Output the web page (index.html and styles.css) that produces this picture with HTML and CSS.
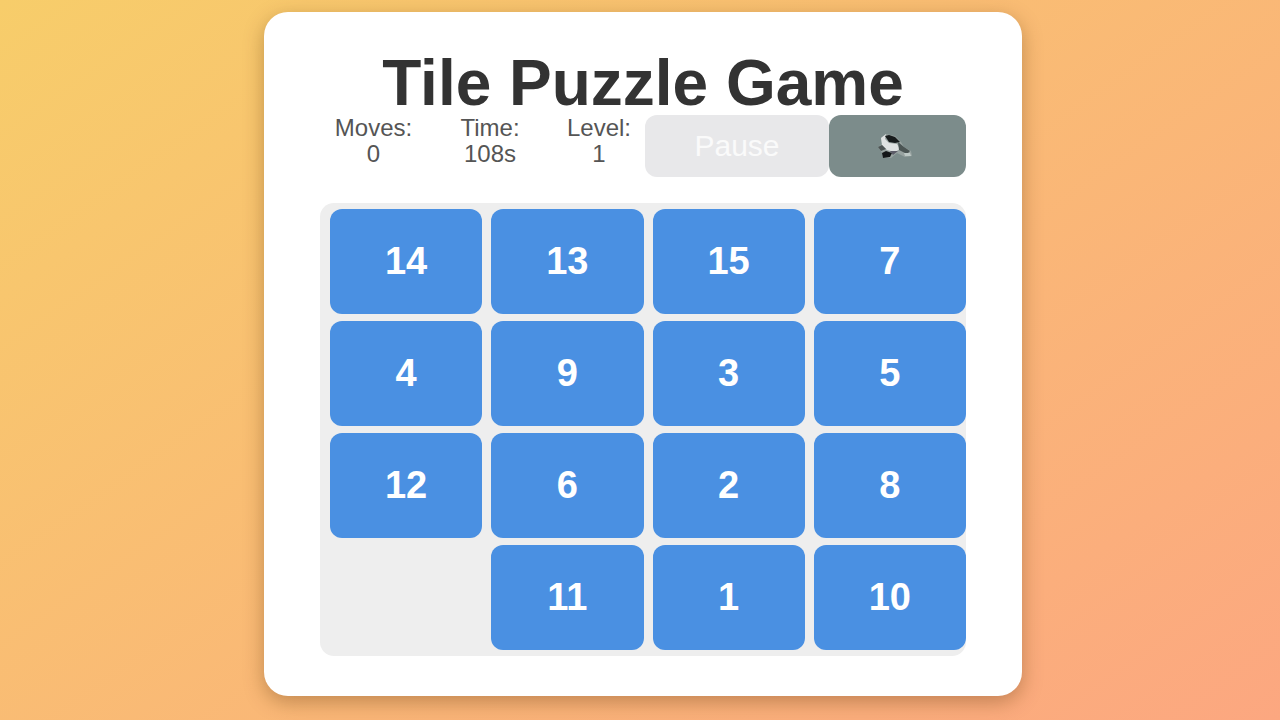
FILE: index.html
```html
<!DOCTYPE html>
<html lang="en">
<head>
<meta charset="utf-8">
<meta name="viewport" content="width=device-width, initial-scale=1">
<title>Tile Puzzle Game</title>
<link rel="stylesheet" href="styles.css">
</head>
<body>
<main class="card">
  <h1 class="title">Tile Puzzle Game</h1>
  <div class="toolbar">
    <div class="stats">
      <div class="stat">Moves: <span class="value">0</span></div>
      <div class="stat">Time: <span class="value">108s</span></div>
      <div class="stat">Level: <span class="value">1</span></div>
    </div>
    <button class="button pause" type="button" disabled>Pause</button>
    <button class="button sound" type="button" aria-label="Toggle sound">
      <svg class="sound-icon" viewBox="0 0 36 26" aria-hidden="true">
        <path d="M1 14 5 11 4 5 9 1 18 3 24 9 27 14 34 18 35 23 28 24 20 20 14 25 6 25 5 20Z" fill="#98a3a1"/>
        <path d="M4 5 9 1 8 6 12 10 20 11 23 16 18 19 10 17 5 12Z" fill="#dfe2e2"/>
        <path d="M8 3 12 2 18 4 23 9 18 10 12 9Z" fill="#171b1c"/>
        <path d="M21 9 27 14 33 18 30 21 22 17Z" fill="#4b5554"/>
        <path d="M1 14 5 12 9 16 4 18Z" fill="#4c5353"/>
        <path d="M5 20 9 18 15 20 13 24 6 25Z" fill="#141719"/>
        <path d="M13 18 21 18 16 22Z" fill="#5c5c68"/>
        <path d="M27 20 33 20 34 23 28 23Z" fill="#bdc8c5"/>
      </svg>
    </button>
  </div>
  <div class="board">
    <button class="tile" type="button">14</button>
    <button class="tile" type="button">13</button>
    <button class="tile" type="button">15</button>
    <button class="tile" type="button">7</button>
    <button class="tile" type="button">4</button>
    <button class="tile" type="button">9</button>
    <button class="tile" type="button">3</button>
    <button class="tile" type="button">5</button>
    <button class="tile" type="button">12</button>
    <button class="tile" type="button">6</button>
    <button class="tile" type="button">2</button>
    <button class="tile" type="button">8</button>
    <div class="blank"></div>
    <button class="tile" type="button">11</button>
    <button class="tile" type="button">1</button>
    <button class="tile" type="button">10</button>
  </div>
</main>
</body>
</html>
```
FILE: styles.css
```css
* {
  box-sizing: border-box;
}

body {
  margin: 0;
  min-height: 100vh;
  padding: 12px 0 24px 6px;
  display: flex;
  justify-content: center;
  align-items: flex-start;
  background: linear-gradient(145deg, #f7cd6a, #fca780);
  font-family: "Liberation Sans", Arial, sans-serif;
  color: #555;
}

.card {
  width: 100%;
  max-width: 758px;
  padding: 40px 56px;
  background: #fff;
  border-radius: 24px;
  box-shadow: 0 6px 20px rgba(90, 50, 10, 0.35);
}

.title {
  margin: 0;
  font-size: 64px;
  line-height: 63px;
  text-align: center;
  color: #333;
}

.toolbar {
  display: flex;
  align-items: flex-start;
}

.stats {
  flex: 1;
  display: grid;
  grid-template-columns: 107fr 126fr 92fr;
}

.stat {
  font-size: 24px;
  line-height: 26px;
  text-align: center;
}

.value {
  display: block;
}

.button {
  height: 62px;
  padding: 0;
  border: 0;
  border-radius: 12px;
  font-family: inherit;
  font-size: 30px;
  color: #fff;
}

.pause {
  width: 184px;
  background: #e8e8ea;
  color: #fafafa;
}

.sound {
  width: 137px;
  display: flex;
  align-items: center;
  justify-content: center;
  padding-right: 6px;
  background: #7c8c8b;
}

.sound-icon {
  width: 36px;
  height: 26px;
}

.board {
  display: grid;
  grid-template-columns: repeat(4, 1fr);
  grid-auto-rows: 105px;
  gap: 7px 9px;
  margin-top: 26px;
  padding: 6px 0 6px 10px;
  background: #eee;
  border-radius: 14px;
}

.tile {
  padding: 0;
  border: 0;
  border-radius: 12px;
  background: #4a90e2;
  color: #fff;
  font-family: inherit;
  font-size: 38px;
  font-weight: 700;
}
```
